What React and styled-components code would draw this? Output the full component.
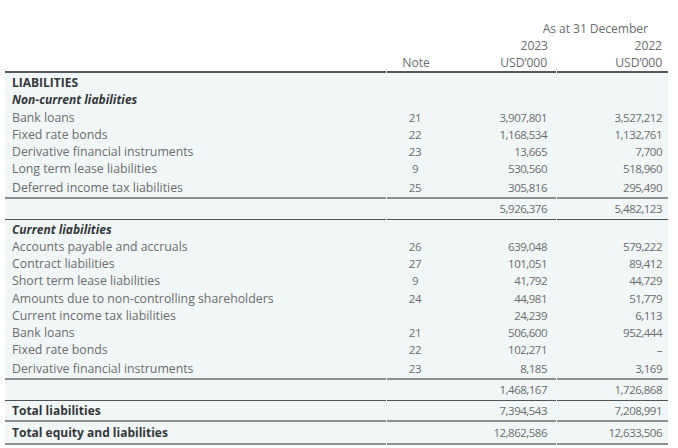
import React from "react";
import styled, { createGlobalStyle } from "styled-components";

const GlobalStyle = createGlobalStyle`
	body {
		margin: 0;
		background: #ffffff;
		font-family: "Open Sans", "Noto Sans", sans-serif;
	}
`;

const nonCurrent = [
	["Bank loans", "21", "3,907,801", "3,527,212"],
	["Fixed rate bonds", "22", "1,168,534", "1,132,761"],
	["Derivative financial instruments", "23", "13,665", "7,700"],
	["Long term lease liabilities", "9", "530,560", "518,960"],
	["Deferred income tax liabilities", "25", "305,816", "295,490"],
];

const current = [
	["Accounts payable and accruals", "26", "639,048", "579,222"],
	["Contract liabilities", "27", "101,051", "89,412"],
	["Short term lease liabilities", "9", "41,792", "44,729"],
	["Amounts due to non-controlling shareholders", "24", "44,981", "51,779"],
	["Current income tax liabilities", "", "24,239", "6,113"],
	["Bank loans", "21", "506,600", "952,444"],
	["Fixed rate bonds", "22", "102,271", "–"],
	["Derivative financial instruments", "23", "8,185", "3,169"],
];

function App() {
	return (
		<Page>
			<GlobalStyle />
			<Sheet>
				<Head>
					<HeadRow>
						<HeadCell />
						<HeadCell />
						<SpanCell>As at 31 December</SpanCell>
					</HeadRow>
					<HeadRow>
						<HeadCell />
						<HeadCell />
						<HeadCell $align='right'>2023</HeadCell>
						<HeadCell $align='right' $last>
							2022
						</HeadCell>
					</HeadRow>
					<HeadRow $rule>
						<HeadCell $gap />
						<HeadCell $align='center'>Note</HeadCell>
						<HeadCell $align='right' $gap>
							USD’000
						</HeadCell>
						<HeadCell $align='right' $last>
							USD’000
						</HeadCell>
					</HeadRow>
				</Head>
				<Body>
					<Row>
						<Label $heading>LIABILITIES</Label>
						<Note />
						<Value />
						<Value $last />
					</Row>
					<Row>
						<Label $sub>Non-current liabilities</Label>
						<Note />
						<Value />
						<Value $last />
					</Row>
					{nonCurrent.map((item, index) => (
						<Row key={item[0]} $line={index === nonCurrent.length - 1 ? "light" : ""}>
							<Label>{item[0]}</Label>
							<Note>{item[1]}</Note>
							<Value>{item[2]}</Value>
							<Value $last>{item[3]}</Value>
						</Row>
					))}
					<Row $line='dark'>
						<Label />
						<Note />
						<Value>5,926,376</Value>
						<Value $last>5,482,123</Value>
					</Row>
					<Row $top>
						<Label $sub>Current liabilities</Label>
						<Note />
						<Value />
						<Value $last />
					</Row>
					{current.map((item, index) => (
						<Row key={item[0] + index} $line={index === current.length - 1 ? "light" : ""}>
							<Label>{item[0]}</Label>
							<Note>{item[1]}</Note>
							<Value>{item[2]}</Value>
							<Value $last>{item[3]}</Value>
						</Row>
					))}
					<Row $line='dark'>
						<Label />
						<Note />
						<Value>1,468,167</Value>
						<Value $last>1,726,868</Value>
					</Row>
					<Row $line='light'>
						<Label $heading>Total liabilities</Label>
						<Note />
						<Value>7,394,543</Value>
						<Value $last>7,208,991</Value>
					</Row>
					<Row $tall $line='light'>
						<Label $heading>Total equity and liabilities</Label>
						<Note />
						<Value>12,862,586</Value>
						<Value $last>12,633,506</Value>
					</Row>
				</Body>
			</Sheet>
		</Page>
	);
}

export default App;

const Page = styled.div`
	width: 678px;
	height: 448px;
	padding: 20px 0 0 5px;
	box-sizing: border-box;
	overflow: hidden;
`;

const Sheet = styled.div`
	width: 663px;
`;

const Head = styled.div`
	background: #ffffff;
`;

const columns = `382px 58px 112px 111px`;

const HeadRow = styled.div`
	display: grid;
	grid-template-columns: ${columns};
	height: 17px;
	& > * {
		border-bottom: ${(props) => (props.$rule ? "2px solid #555a5c" : "0")};
	}
`;

const HeadCell = styled.div`
	display: flex;
	align-items: center;
	justify-content: ${(props) =>
		props.$align === "right" ? "flex-end" : props.$align === "center" ? "center" : "flex-start"};
	padding-right: ${(props) => (props.$last ? "6px" : props.$align === "right" ? "9px" : "0")};
	margin-right: ${(props) => (props.$gap ? "1px" : "0")};
	font-size: 12.2px;
	letter-spacing: -0.1px;
	color: #6a6d70;
	box-sizing: border-box;
	white-space: nowrap;
`;

const SpanCell = styled(HeadCell)`
	grid-column: span 2;
	justify-content: flex-end;
	padding-right: 20px;
`;

const Body = styled.div`
	background: #f1f6f6;
	padding-top: 3px;
`;

const Row = styled.div`
	display: grid;
	grid-template-columns: ${columns};
	height: ${(props) => (props.$tall ? "23px" : props.$line ? "21px" : "17.25px")};
	margin-top: ${(props) => (props.$top ? "1px" : "0")};
	& > * {
		border-bottom: ${(props) =>
			props.$line === "dark" ? "1.5px solid #4e5356" : props.$line === "light" ? "2px solid #8c9092" : "0"};
	}
`;

const Cell = styled.div`
	display: flex;
	align-items: center;
	box-sizing: border-box;
	white-space: nowrap;
	color: #6a6d70;
`;

const Label = styled(Cell)`
	margin-right: 1px;
	padding-left: 7px;
	font-size: ${(props) => (props.$heading || props.$sub ? "12px" : "12.3px")};
	font-weight: ${(props) => (props.$heading || props.$sub ? 700 : 400)};
	font-style: ${(props) => (props.$sub ? "italic" : "normal")};
	color: ${(props) => (props.$heading || props.$sub ? "#33383b" : "#6a6d70")};
`;

const Note = styled(Cell)`
	justify-content: center;
	padding-right: 2px;
	font-size: 11.5px;
	letter-spacing: -0.4px;
`;

const Value = styled(Cell)`
	justify-content: flex-end;
	margin-right: ${(props) => (props.$last ? "0" : "1px")};
	padding-right: ${(props) => (props.$last ? "6px" : "9px")};
	font-size: 11.5px;
	letter-spacing: -0.5px;
`;
